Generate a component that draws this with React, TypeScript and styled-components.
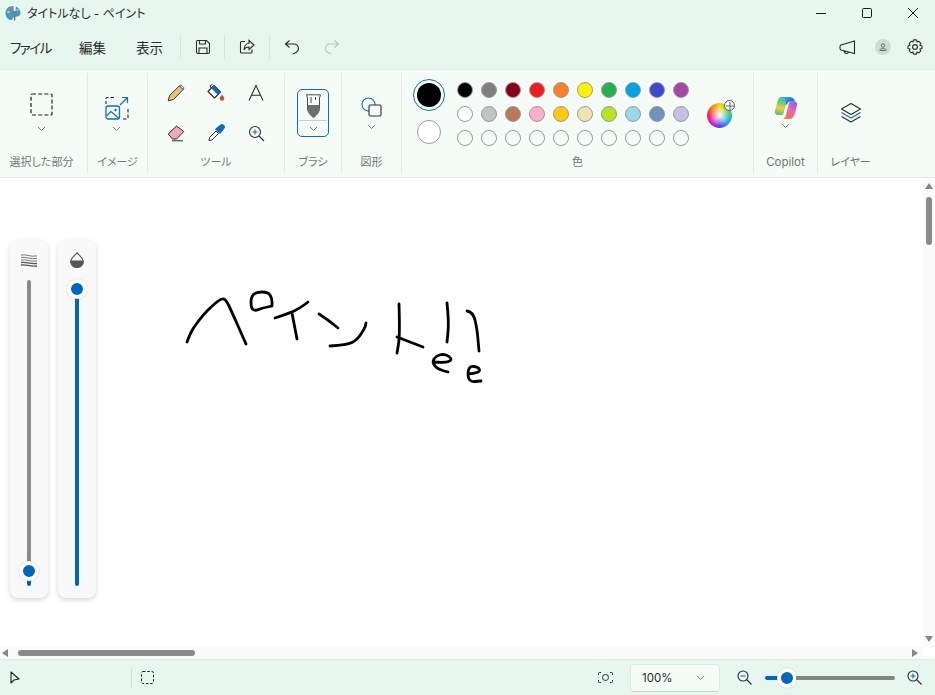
import React from 'react'
import styled, { createGlobalStyle } from 'styled-components'

const ROW_1 = ['#000000', '#7f7f7f', '#880015', '#ed1c24', '#ff7f27', '#fff200', '#22b14c', '#00a2e8', '#3f48cc', '#a349a4']
const ROW_2 = ['#ffffff', '#c3c3c3', '#b97a57', '#ffaec9', '#ffc90e', '#efe4b0', '#b5e61d', '#99d9ea', '#7092be', '#c8bfe7']
const ROW_3 = Array(10).fill('transparent')

const STROKES: number[][][] = [
  [[187, 342], [190, 334], [194, 327], [203, 315], [213, 305], [222, 298], [226, 300], [231, 310], [246, 344]],
  [[272, 306], [262, 308], [255, 311], [251, 308], [251, 297], [256, 292], [268, 292], [272, 298], [272, 306]],
  [[275, 318], [290, 313], [300, 308], [308, 302]],
  [[292, 313], [297, 339]],
  [[319, 314], [328, 320], [338, 328]],
  [[330, 346], [347, 345], [357, 340], [365, 328], [366, 323]],
  [[399, 304], [400, 335], [397, 353]],
  [[397, 337], [410, 342], [423, 347]],
  [[447, 303], [449, 322], [447, 342]],
  [[467, 311], [473, 312], [477, 328], [479, 351]],
  [[434, 362], [445, 363], [452, 360], [449, 356], [443, 354], [436, 356], [432, 362], [437, 369], [448, 372]],
  [[468, 374], [480, 373], [479, 367], [468, 366], [468, 382], [481, 381]],
]

// quadratic curves through the midpoints, so the pen lines stay soft
const smooth = (pts: number[][]) => {
  let d = `M${pts[0][0]} ${pts[0][1]}`
  for (let i = 1; i < pts.length - 1; i++) {
    const mx = (pts[i][0] + pts[i + 1][0]) / 2
    const my = (pts[i][1] + pts[i + 1][1]) / 2
    d += ` Q${pts[i][0]} ${pts[i][1]} ${mx} ${my}`
  }
  const last = pts[pts.length - 1]
  return `${d} L${last[0]} ${last[1]}`
}

const GlobalStyle = createGlobalStyle`
  html, body {
    margin: 0;
    padding: 0;
    overflow: hidden;
  }
  body {
    font-family: "Inter", "Noto Sans CJK JP", sans-serif;
    font-feature-settings: "palt";
  }
`

const Chevron = () => (
  <svg width="9" height="6" viewBox="0 0 9 6" fill="none" stroke="#7a7a7a" strokeWidth="1">
    <path d="M1 1 L4.5 4.5 L8 1" />
  </svg>
)

const App = () => {
  return (
    <Window>
      <GlobalStyle />
      <TitleBar>
        <svg width="16" height="16" viewBox="0 0 16 16">
          <path d="M8 1 C3 1 .5 4.5 .5 8 C.5 12 3 15 6 15 C8 15 7.500 12.500 9 12 C11 11.500 15.500 12 15.500 8 C15.500 4 12 1 8 1 Z" fill="#3f9bd0" />
          <circle cx="3.500" cy="7" r="1.300" fill="#f2c14e" />
          <circle cx="6" cy="3.600" r="1.300" fill="#e8604c" />
          <circle cx="12.500" cy="5" r="1.300" fill="#8ed081" />
          <path d="M8.500 1 H11 L10.500 6 H8.800 Z" fill="#e4f2fa" />
          <path d="M8.800 6 H10.500 L10.300 15.500 H8.800 Z" fill="#a9703a" />
        </svg>
        <TitleText>タイトルなし - ペイント</TitleText>
        <WindowControls>
          <WindowButton>
            <svg width="12" height="12" viewBox="0 0 12 12" stroke="#1a1a1a" strokeWidth="1"><path d="M1 6.500 H11" /></svg>
          </WindowButton>
          <WindowButton>
            <svg width="12" height="12" viewBox="0 0 12 12" fill="none" stroke="#1a1a1a" strokeWidth="1"><rect x="1.500" y="1.500" width="9" height="9" rx="1" /></svg>
          </WindowButton>
          <WindowButton>
            <svg width="12" height="12" viewBox="0 0 12 12" stroke="#1a1a1a" strokeWidth="1"><path d="M1 1 L11 11 M11 1 L1 11" /></svg>
          </WindowButton>
        </WindowControls>
      </TitleBar>

      <MenuBar>
        <MenuItem $width={69} $tight>ファイル</MenuItem>
        <MenuItem $width={57}>編集</MenuItem>
        <MenuItem $width={44}>表示</MenuItem>
        <MenuDivider />
        <MenuIcon $width={43}>
          <svg width="16" height="16" viewBox="0 0 16 16" fill="none" stroke="#2b2b2b" strokeWidth="1.100">
            <path d="M2.500 1.500 H11.500 L14.500 4.500 V13 A1.500 1.500 0 0 1 13 14.500 H3 A1.500 1.500 0 0 1 1.500 13 V2.500 A1 1 0 0 1 2.500 1.500 Z" />
            <path d="M4.500 1.500 V5 H10.500 V1.500 M4 14.500 V9 H12 V14.500" />
          </svg>
        </MenuIcon>
        <MenuDivider />
        <MenuIcon $width={44}>
          <svg width="16" height="16" viewBox="0 0 16 16" fill="none" stroke="#2b2b2b" strokeWidth="1.100">
            <path d="M6 2.500 H2.500 A1 1 0 0 0 1.500 3.500 V13 A1 1 0 0 0 2.500 14 H12 A1 1 0 0 0 13 13 V10.500" />
            <path d="M10 1.500 L15 6 L10 10.500 V8 C7 8 5.500 9.500 5 11 C5 7.500 7 4.500 10 4.200 Z" />
          </svg>
        </MenuIcon>
        <MenuDivider />
        <MenuIcon $width={44}>
          <svg width="16" height="16" viewBox="0 0 16 16" fill="none" stroke="#2b2b2b" strokeWidth="1.100">
            <path d="M5.500 1.500 L1.500 5 L5.500 8.500 M1.500 5 H10 A4.500 4.500 0 0 1 12 13.500 L9 15" />
          </svg>
        </MenuIcon>
        <MenuIcon $width={36}>
          <svg width="16" height="16" viewBox="0 0 16 16" fill="none" stroke="#b9c2bd" strokeWidth="1.100">
            <path d="M10.500 1.500 L14.500 5 L10.500 8.500 M14.500 5 H6 A4.500 4.500 0 0 0 4 13.500 L7 15" />
          </svg>
        </MenuIcon>
        <MenuSpacer />
        <MenuIcon $width={32}>
          <svg width="17" height="15" viewBox="0 0 17 15" fill="none" stroke="#2b2b2b" strokeWidth="1.100">
            <path d="M15.500 1 V13.500 L2 10 A2 2 0 0 1 1 8 V7 A2 2 0 0 1 2 5 Z M5 11 A2.500 2.500 0 0 0 9.500 12.500" />
          </svg>
        </MenuIcon>
        <MenuIcon $width={40}>
          <Avatar>
            <svg width="8" height="8" viewBox="0 0 8 8" fill="none" stroke="#5d6660" strokeWidth=".9">
              <circle cx="4" cy="2.500" r="1.700" />
              <path d="M1 7.500 H7 V6.500 C7 5.500 1 5.500 1 6.500 Z" />
            </svg>
          </Avatar>
        </MenuIcon>
        <MenuIcon $width={24}>
          <svg width="16" height="16" viewBox="0 0 16 16" fill="none" stroke="#2b2b2b" strokeWidth="1.100">
            <circle cx="8" cy="8" r="2.400" />
            <path d="M6.500 .9 H9.500 L10 3 L11.800 2.300 L13.800 4.400 L12.900 6.200 L15 7 V9.500 L12.900 10 L13.800 11.900 L11.800 13.800 L10 13 L9.500 15.100 H6.500 L6 13 L4.200 13.800 L2.200 11.900 L3.100 10 L1 9.500 V7 L3.100 6.200 L2.200 4.400 L4.200 2.300 L6 3 Z" strokeLinejoin="round" />
          </svg>
        </MenuIcon>
      </MenuBar>

      <Ribbon>
        <Group $width={88}>
          <GroupBody $top={21} $gap={10} $shift={-2}>
            <svg width="23" height="23" viewBox="0 0 23 23" fill="none" stroke="#1f1f1f" strokeWidth="1.200" strokeDasharray="4 2.200">
              <rect x="1" y="1" width="21" height="21" rx="1" />
            </svg>
            <Chevron />
          </GroupBody>
          <GroupLabel $shift={-2}>選択した部分</GroupLabel>
        </Group>

        <Group $width={60}>
          <GroupBody $top={24} $gap={6} $shift={-1}>
            <svg width="24" height="24" viewBox="0 0 24 24" fill="none">
              <path d="M9 1.500 H2 A1 1 0 0 0 1 2.500 V8 M18 23 H22 A1 1 0 0 0 23 22 V12" stroke="#1f1f1f" strokeWidth="1.100" strokeDasharray="3.500 2" />
              <rect x="1" y="10" width="13.500" height="13" rx="2" stroke="#0f6cbd" strokeWidth="1.300" />
              <path d="M1.500 20 L6 15.500 L13.500 22" stroke="#0f6cbd" strokeWidth="1.200" />
              <circle cx="10.500" cy="14" r="1.200" fill="#0f6cbd" />
              <path d="M15 9 L22.500 1.500 M17 1.500 H22.500 V7" stroke="#0f6cbd" strokeWidth="1.200" />
            </svg>
            <Chevron />
          </GroupBody>
          <GroupLabel>イメージ</GroupLabel>
        </Group>

        <Group $width={137}>
          <ToolGrid>
            <ToolCell>
              <svg width="18" height="18" viewBox="0 0 18 18">
                <path d="M1.200 16.800 L2.500 11.500 L12.500 1.800 L16.200 5.500 L6.500 15.500 Z" fill="#e8c17a" stroke="#3a3a3a" strokeWidth="1" strokeLinejoin="round" />
                <path d="M12.500 1.800 L14 .9 L17 3.900 L16.200 5.500 Z" fill="#ffffff" stroke="#3a3a3a" strokeWidth=".8" />
              </svg>
            </ToolCell>
            <ToolCell>
              <svg width="18" height="18" viewBox="0 0 18 18">
                <path d="M1 7.500 L7 1.500 L13.500 8 L7.500 14 Z" fill="#ffffff" stroke="#2b2b2b" strokeWidth="1.100" strokeLinejoin="round" />
                <path d="M7 2 L13 8 L10.500 10.500 L4.500 4.500 Z" fill="#0f6cbd" />
                <path d="M4 4 L3 1.500 L5.500 .5" fill="none" stroke="#2b2b2b" strokeWidth="1" />
                <path d="M15 10.500 C15.800 12 17.300 13 17.300 14.500 A2.300 2.300 0 0 1 12.700 14.500 C12.700 13 14.200 12 15 10.500 Z" fill="#c8502a" />
              </svg>
            </ToolCell>
            <ToolCell>
              <svg width="18" height="18" viewBox="0 0 18 18" fill="none" stroke="#2b2b2b" strokeWidth="1.100">
                <path d="M2 16.500 L9 1.500 L16 16.500 M4.500 11.200 H13.500" />
              </svg>
            </ToolCell>
            <ToolCell>
              <svg width="18" height="18" viewBox="0 0 18 18">
                <path d="M1.200 10 L9.500 2 L16.800 7.500 L9.500 15 L5.500 15 Z" fill="#f4a9ae" stroke="#2b2b2b" strokeWidth="1" strokeLinejoin="round" />
                <path d="M5 16.800 H16" stroke="#2b2b2b" strokeWidth="1" />
              </svg>
            </ToolCell>
            <ToolCell>
              <svg width="18" height="18" viewBox="0 0 18 18">
                <path d="M2 16.500 L2.500 13.500 L9 7 L11.500 9.500 L5 16 Z" fill="#ffffff" stroke="#2b2b2b" strokeWidth="1" strokeLinejoin="round" />
                <path d="M8 5 L11 2.500 L13 1 A2.500 2.500 0 0 1 17 5 L15.500 7 L13 10 Z" fill="#0f6cbd" />
              </svg>
            </ToolCell>
            <ToolCell>
              <svg width="17" height="17" viewBox="0 0 17 17" fill="none" stroke="#2b2b2b" strokeWidth="1.100">
                <circle cx="7" cy="7" r="5.500" />
                <path d="M11 11 L16 16" />
                <path d="M4.500 7 H9.500 M7 4.500 V9.500" stroke="#0f6cbd" />
              </svg>
            </ToolCell>
          </ToolGrid>
          <GroupLabel>ツール</GroupLabel>
        </Group>

        <Group $width={57}>
          <GroupBody $top={17} $gap={0}>
            <BrushButton>
              <BrushPreview>
                <svg width="15" height="24" viewBox="0 0 15 24">
                  <path d="M.5 .8 H14.500 L13.500 4 V14 C13.500 18 10.500 21.500 7.500 23.500 C4.500 21.500 1.500 18 1.500 14 V4 Z" fill="#f7fbf9" stroke="#4a4a4a" strokeWidth="1" />
                  <path d="M1.500 11 H13.500 V14 C13.500 18 10.500 21.500 7.500 23.500 C4.500 21.500 1.500 18 1.500 14 Z" fill="#6e6e6e" />
                  <path d="M5 3 V9 M9.500 3 V6" stroke="#4a4a4a" strokeWidth="1" />
                </svg>
              </BrushPreview>
              <BrushChevron><Chevron /></BrushChevron>
            </BrushButton>
          </GroupBody>
          <GroupLabel>ブラシ</GroupLabel>
        </Group>

        <Group $width={60}>
          <GroupBody $top={25} $gap={7}>
            <svg width="21" height="20" viewBox="0 0 21 20" fill="none">
              <circle cx="7.500" cy="7.500" r="6.500" stroke="#0f6cbd" strokeWidth="1.100" />
              <rect x="8" y="8" width="12" height="11" rx="1.500" fill="#f5fcf8" stroke="#2b2b2b" strokeWidth="1.100" />
            </svg>
            <Chevron />
          </GroupBody>
          <GroupLabel>図形</GroupLabel>
        </Group>

        <Group $width={352}>
          <ColorBody>
            <CurrentColors>
              <ActiveRing><ColorDot $size={24} $color="#000000" /></ActiveRing>
              <SecondColor />
            </CurrentColors>
            <Palette>
              {[ROW_1, ROW_2, ROW_3].map((row, r) =>
                row.map((color, c) => <Swatch key={`${r}-${c}`} $color={color} />)
              )}
            </Palette>
            <WheelSlot>
              <ColorWheel>
                <PlusBadge>
                  <svg width="8" height="8" viewBox="0 0 8 8" stroke="#6a6a6a" strokeWidth="1"><path d="M4 0 V8 M0 4 H8" /></svg>
                </PlusBadge>
              </ColorWheel>
            </WheelSlot>
          </ColorBody>
          <GroupLabel>色</GroupLabel>
        </Group>

        <Group $width={64}>
          <GroupBody $top={24} $gap={3}>
            <svg width="24" height="24" viewBox="0 0 24 24">
              <defs>
                <linearGradient id="copTop" x1="0" y1="0" x2="1" y2="1">
                  <stop offset="0" stopColor="#2fb7ef" />
                  <stop offset=".6" stopColor="#1e6fe0" />
                  <stop offset="1" stopColor="#2346c0" />
                </linearGradient>
                <linearGradient id="copLeft" x1=".5" y1="0" x2=".3" y2="1">
                  <stop offset="0" stopColor="#34b8d8" />
                  <stop offset=".35" stopColor="#79cf5e" />
                  <stop offset=".6" stopColor="#f7c948" />
                  <stop offset="1" stopColor="#4fc27e" />
                </linearGradient>
                <linearGradient id="copRight" x1="1" y1="0" x2="0" y2="1">
                  <stop offset="0" stopColor="#8a5fe8" />
                  <stop offset=".45" stopColor="#e464c2" />
                  <stop offset=".75" stopColor="#f4714e" />
                  <stop offset="1" stopColor="#ffa53d" />
                </linearGradient>
              </defs>
              <path d="M8 1 C5 1 4 3 3 7 L1 15 C.5 17.500 2 19 4 19 H8 C9 19 9.500 18 10 16 L12 8 C12.500 6 13 3 15 1 Z" fill="url(#copLeft)" />
              <path d="M16 5.500 H20 C22.500 5.500 23.500 7 23 9 L21 17 C20.500 19 19 23 16 23 H8 C10 23 11.500 21 12 19 L14 11 C14.500 9 15 6.500 16 5.500 Z" fill="url(#copRight)" />
              <path d="M9 1 H16 C18.500 1 20 2.500 21 5.500 H16 C14.500 5.500 13.500 7 13 9 L12 8 C12.500 6 11 3 9 1 Z" fill="url(#copTop)" />
            </svg>
            <Chevron />
          </GroupBody>
          <CopilotLabel>Copilot</CopilotLabel>
        </Group>

        <Group $width={66} $last>
          <GroupBody $top={30} $gap={0}>
            <svg width="22" height="22" viewBox="0 0 22 22" fill="none" strokeWidth="1.100" strokeLinejoin="round">
              <path d="M11 1.500 L20.500 7 L11 12.500 L1.500 7 Z" stroke="#2b2b2b" />
              <path d="M1.500 10.500 L11 16 L20.500 10.500" stroke="#0f6cbd" />
              <path d="M1.500 14.500 L11 20 L20.500 14.500" stroke="#2b2b2b" />
            </svg>
          </GroupBody>
          <GroupLabel>レイヤー</GroupLabel>
        </Group>
      </Ribbon>

      <Workspace>
        <Canvas>
          <Drawing width="923" height="469" viewBox="0 178 923 469" fill="none" stroke="#000" strokeWidth="2.800" strokeLinecap="round" strokeLinejoin="round">
            {STROKES.map((pts, i) => <path key={i} d={smooth(pts)} />)}
          </Drawing>
          <SliderPanels>
            <SliderPanel>
              <SliderIcon>
                <svg width="16" height="13" viewBox="0 0 16 13" fill="none" stroke="#555" strokeWidth="1">
                  <path d="M0 1 C5 0 9 3 16 2 M0 3.500 C5 2.500 9 5.500 16 4.500 M0 6 C5 5 9 8 16 7" strokeWidth=".8" />
                  <path d="M0 8.500 C5 7.500 9 10.500 16 9.500 M0 11 C5 10 9 13 16 12" strokeWidth="1.300" />
                </svg>
              </SliderIcon>
              <SliderTrack $color="#8a8a8a" $low="#0067c0" $split={94}>
                <SliderThumb $top={291} />
              </SliderTrack>
            </SliderPanel>
            <SliderPanel>
              <SliderIcon>
                <svg width="14" height="16" viewBox="0 0 14 16">
                  <path d="M7 .8 C9 3.500 13.300 6 13.300 10 A6.300 5.500 0 0 1 .7 10 C.7 6 5 3.500 7 .8 Z" fill="none" stroke="#555" strokeWidth="1.100" />
                  <path d="M.7 8.500 H13.300 C13.800 13 10 15.500 7 15.500 C4 15.500 .2 13 .7 8.500 Z" fill="#555" />
                </svg>
              </SliderIcon>
              <SliderTrack $color="#0067c0" $low="#0067c0" $split={100}>
                <SliderThumb $top={9} />
              </SliderTrack>
            </SliderPanel>
          </SliderPanels>
        </Canvas>
        <VScroll>
          <Arrow $dir="up" />
          <VThumbRail><VThumb /></VThumbRail>
          <Arrow $dir="down" />
        </VScroll>
      </Workspace>

      <HScrollRow>
        <HScroll>
          <Arrow $dir="left" />
          <HThumbRail><HThumb /></HThumbRail>
          <Arrow $dir="right" />
        </HScroll>
        <ScrollCorner />
      </HScrollRow>

      <StatusBar>
        <StatusLeft>
          <svg width="10" height="13" viewBox="0 0 10 13" fill="none" stroke="#1f1f1f" strokeWidth="1.100">
            <path d="M1 1 V12 L4 9 L9 8 Z" strokeLinejoin="round" />
          </svg>
        </StatusLeft>
        <StatusDivider />
        <svg width="13" height="13" viewBox="0 0 13 13" fill="none" stroke="#1f1f1f" strokeWidth="1" strokeDasharray="2.500 1.800">
          <rect x=".5" y=".5" width="12" height="12" rx="1.500" />
        </svg>
        <StatusSpacer />
        <svg width="15" height="11" viewBox="0 0 15 11" fill="none" stroke="#2b2b2b" strokeWidth="1">
          <circle cx="7.500" cy="5.500" r="3" />
          <path d="M3 .5 H1.500 A1 1 0 0 0 .5 1.500 V3 M12 .5 H13.500 A1 1 0 0 1 14.500 1.500 V3 M3 10.500 H1.500 A1 1 0 0 1 .5 9.500 V8 M12 10.500 H13.500 A1 1 0 0 0 14.500 9.500 V8" />
        </svg>
        <ZoomSelect>
          <span>100%</span>
          <Chevron />
        </ZoomSelect>
        <svg width="15" height="15" viewBox="0 0 15 15" fill="none" stroke="#2b2b2b" strokeWidth="1.100">
          <circle cx="6" cy="6" r="5" />
          <path d="M9.500 9.500 L14.500 14.500" />
          <path d="M3.500 6 H8.500" stroke="#0f6cbd" />
        </svg>
        <ZoomSlider>
          <ZoomFill />
          <ZoomKnob />
          <ZoomRest />
        </ZoomSlider>
        <svg width="15" height="15" viewBox="0 0 15 15" fill="none" stroke="#2b2b2b" strokeWidth="1.100">
          <circle cx="6" cy="6" r="5" />
          <path d="M9.500 9.500 L14.500 14.500" />
          <path d="M3.500 6 H8.500 M6 3.500 V8.500" stroke="#0f6cbd" />
        </svg>
      </StatusBar>
    </Window>
  )
}

const Window = styled.div`
  width: 935px;
  height: 695px;
  display: flex;
  flex-direction: column;
  background: #e6f7ef;
  color: #1f1f1f;
  overflow: hidden;
`

const TitleBar = styled.div`
  height: 29px;
  flex: none;
  box-sizing: border-box;
  display: flex;
  align-items: center;
  padding: 0 0 4px 5px;
`

const TitleText = styled.span`
  margin-left: 6px;
  font-size: 12px;
  color: #2b2b2b;
  white-space: nowrap;
`

const WindowControls = styled.div`
  margin-left: auto;
  display: flex;
  margin-right: -1px;
`

const WindowButton = styled.div`
  width: 46px;
  height: 25px;
  display: flex;
  align-items: center;
  justify-content: center;
`

const MenuBar = styled.div`
  height: 40px;
  flex: none;
  display: flex;
  align-items: center;
  padding: 0 8px 4px 10px;
  box-sizing: border-box;
`

const MenuItem = styled.div<{ $width: number; $tight?: boolean }>`
  width: ${(p) => p.$width}px;
  font-size: 13.500px;
  letter-spacing: ${(p) => (p.$tight ? '-1.500px' : '0')};
  color: #2b2b2b;
  white-space: nowrap;
`

const MenuDivider = styled.div`
  width: 1px;
  height: 24px;
  background: #d7e3dd;
`

const MenuIcon = styled.div<{ $width: number }>`
  width: ${(p) => p.$width}px;
  display: flex;
  justify-content: center;
`

const MenuSpacer = styled.div`
  flex: 1;
`

const Avatar = styled.div`
  width: 16px;
  height: 16px;
  border-radius: 50%;
  background: #d2dad6;
  display: flex;
  align-items: center;
  justify-content: center;
`

const Ribbon = styled.div`
  height: 109px;
  flex: none;
  box-sizing: border-box;
  padding: 3px 0 4px;
  display: flex;
  background: #f5fcf8;
  border-top: 1px solid #e4ece8;
  border-bottom: 1px solid #e3e7e5;
`

const Group = styled.div<{ $width: number; $last?: boolean }>`
  width: ${(p) => p.$width}px;
  flex: none;
  box-sizing: border-box;
  display: flex;
  flex-direction: column;
  border-right: 1px solid ${(p) => (p.$last ? 'transparent' : '#e2ebe6')};
`

const GroupBody = styled.div<{ $top: number; $gap: number; $shift?: number }>`
  height: 78px;
  box-sizing: border-box;
  padding-top: ${(p) => p.$top - 1}px;
  padding-right: ${(p) => -(p.$shift ?? 0) * 2}px;
  display: flex;
  flex-direction: column;
  align-items: center;
  gap: ${(p) => p.$gap}px;
`

const GroupLabel = styled.div<{ $shift?: number }>`
  height: 22px;
  line-height: 22px;
  font-size: 11px;
  color: #6f7672;
  text-align: center;
  white-space: nowrap;
  padding-right: ${(p) => -(p.$shift ?? 0) * 2}px;
`

const CopilotLabel = styled(GroupLabel)`
  font-size: 11.500px;
`

const ToolGrid = styled.div`
  height: 78px;
  display: grid;
  grid-template-columns: repeat(3, 40px);
  grid-template-rows: repeat(2, 40px);
  justify-content: center;
`

const ToolCell = styled.div`
  display: flex;
  align-items: center;
  justify-content: center;
`

const BrushButton = styled.div`
  width: 32px;
  height: 48px;
  box-sizing: border-box;
  border: 1.300px solid #0f6cbd;
  border-radius: 5px;
  display: flex;
  flex-direction: column;
  align-items: center;
  background: #f3faf7;
`

const BrushPreview = styled.div`
  height: 31px;
  width: 28px;
  display: flex;
  align-items: flex-end;
  justify-content: center;
  padding-bottom: 2px;
  box-sizing: border-box;
  border-bottom: 1px solid #c9cfcc;
`

const BrushChevron = styled.div`
  flex: 1;
  display: flex;
  align-items: center;
`

const ColorBody = styled.div`
  height: 78px;
  display: flex;
  align-items: flex-start;
  padding-left: 11px;
`

const CurrentColors = styled.div`
  width: 32px;
  padding-top: 6px;
  display: flex;
  flex-direction: column;
  align-items: center;
  gap: 9px;
`

const ActiveRing = styled.div`
  width: 32px;
  height: 32px;
  box-sizing: border-box;
  border: 1.200px solid #0f6cbd;
  border-radius: 50%;
  display: flex;
  align-items: center;
  justify-content: center;
`

const ColorDot = styled.div<{ $size: number; $color: string }>`
  width: ${(p) => p.$size}px;
  height: ${(p) => p.$size}px;
  border-radius: 50%;
  background: ${(p) => p.$color};
`

const SecondColor = styled.div`
  width: 24px;
  height: 24px;
  box-sizing: border-box;
  border: 1px solid #9a9a9a;
  border-radius: 50%;
  background: #ffffff;
`

const Palette = styled.div`
  margin-left: 12px;
  padding-top: 9px;
  display: grid;
  grid-template-columns: repeat(10, 16px);
  grid-auto-rows: 16px;
  gap: 8px;
`

const Swatch = styled.div<{ $color: string }>`
  box-sizing: border-box;
  border-radius: 50%;
  border: 1px solid #9a9a9a;
  background: ${(p) => p.$color};
`

const WheelSlot = styled.div`
  margin-left: 18px;
  padding-top: 30px;
`

const ColorWheel = styled.div`
  position: relative;
  width: 25px;
  height: 25px;
  border-radius: 50%;
  background:
    radial-gradient(circle, #ffffff 0%, rgba(255, 255, 255, 0) 60%),
    conic-gradient(#ffd400, #7ed321, #26c6a6, #2a9df4, #5a3fe0, #d51fd0, #f01f5a, #f57a1f, #ffd400);
`

const PlusBadge = styled.div`
  position: absolute;
  top: -3px;
  right: -3px;
  width: 11px;
  height: 11px;
  box-sizing: border-box;
  border: 1px solid #5a5a5a;
  border-radius: 50%;
  background: #f5fcf8;
  display: flex;
  align-items: center;
  justify-content: center;
`

const Workspace = styled.div`
  height: 469px;
  flex: none;
  display: flex;
`

const Canvas = styled.div`
  position: relative;
  flex: 1;
  background: #ffffff;
`

const Drawing = styled.svg`
  position: absolute;
  inset: 0;
`

const SliderPanels = styled.div`
  position: absolute;
  left: 10px;
  top: 62px;
  display: flex;
  gap: 10px;
`

const SliderPanel = styled.div`
  width: 38px;
  height: 358px;
  box-sizing: border-box;
  padding-top: 11px;
  border-radius: 8px;
  background: #f9f9f9;
  box-shadow: 0 2px 5px rgba(0, 0, 0, 0.16);
  display: flex;
  flex-direction: column;
  align-items: center;
  gap: 11px;
`

const SliderIcon = styled.div`
  height: 18px;
  display: flex;
  align-items: center;
`

const SliderTrack = styled.div<{ $color: string; $low: string; $split: number }>`
  position: relative;
  width: 4px;
  height: 306px;
  border-radius: 2px;
  background: linear-gradient(
    to bottom,
    ${(p) => p.$color} ${(p) => p.$split}%,
    ${(p) => p.$low} ${(p) => p.$split}%
  );
`

const SliderThumb = styled.div<{ $top: number }>`
  position: absolute;
  left: -8px;
  top: ${(p) => p.$top - 10}px;
  width: 20px;
  height: 20px;
  box-sizing: border-box;
  border: 4px solid #ffffff;
  border-radius: 50%;
  background: #0067c0;
  box-shadow: 0 0 2px rgba(0, 0, 0, 0.2);
`

const VScroll = styled.div`
  width: 12px;
  flex: none;
  background: #fafafa;
  display: flex;
  flex-direction: column;
  align-items: center;
  padding: 5px 0 5px;
  box-sizing: border-box;
`

const VThumbRail = styled.div`
  flex: 1;
  padding-top: 8px;
`

const VThumb = styled.div`
  width: 6px;
  height: 48px;
  border-radius: 3px;
  background: #8a8a8a;
`

const Arrow = styled.div<{ $dir: 'up' | 'down' | 'left' | 'right' }>`
  width: 0;
  height: 0;
  flex: none;
  ${(p) => (p.$dir === 'up' ? 'border-bottom: 6px solid #858585; border-left: 4.5px solid transparent; border-right: 4.5px solid transparent;' : '')}
  ${(p) => (p.$dir === 'down' ? 'border-top: 6px solid #858585; border-left: 4.5px solid transparent; border-right: 4.5px solid transparent;' : '')}
  ${(p) => (p.$dir === 'left' ? 'border-right: 6px solid #858585; border-top: 4.5px solid transparent; border-bottom: 4.5px solid transparent;' : '')}
  ${(p) => (p.$dir === 'right' ? 'border-left: 6px solid #858585; border-top: 4.5px solid transparent; border-bottom: 4.5px solid transparent;' : '')}
`

const HScrollRow = styled.div`
  height: 12px;
  flex: none;
  display: flex;
`

const HScroll = styled.div`
  flex: 1;
  background: #fafafa;
  display: flex;
  align-items: center;
  padding: 0 5px 0 2px;
`

const HThumbRail = styled.div`
  flex: 1;
  padding-left: 10px;
`

const HThumb = styled.div`
  width: 177px;
  height: 6px;
  border-radius: 3px;
  background: #8a8a8a;
`

const ScrollCorner = styled.div`
  width: 12px;
  background: #ffffff;
`

const StatusBar = styled.div`
  flex: 1;
  display: flex;
  align-items: center;
  padding: 0 13px 0 10px;
  background: #e6f7f0;
  border-top: 1px solid #e1e9e5;
`

const StatusLeft = styled.div`
  width: 121px;
  display: flex;
`

const StatusDivider = styled.div`
  width: 1px;
  height: 20px;
  background: #d5dfda;
  margin-right: 9px;
`

const StatusSpacer = styled.div`
  flex: 1;
`

const ZoomSelect = styled.div`
  margin: 0 17px;
  width: 90px;
  height: 28px;
  box-sizing: border-box;
  padding: 0 14px 0 11px;
  display: flex;
  align-items: center;
  justify-content: space-between;
  font-size: 11.500px;
  color: #2b2b2b;
  background: #f5fcf8;
  border: 1px solid #e0e8e4;
  border-bottom-color: #c9d2cd;
  border-radius: 4px;
`

const ZoomSlider = styled.div`
  margin: 0 12px 0 13px;
  width: 130px;
  display: flex;
  align-items: center;
`

const ZoomFill = styled.div`
  width: 13px;
  height: 4px;
  border-radius: 2px 0 0 2px;
  background: #0067c0;
`

const ZoomKnob = styled.div`
  width: 20px;
  height: 20px;
  flex: none;
  margin: 0 -1px 0 -1px;
  box-sizing: border-box;
  border: 4px solid #ffffff;
  border-radius: 50%;
  background: #0067c0;
  box-shadow: 0 0 2px rgba(0, 0, 0, 0.2);
`

const ZoomRest = styled.div`
  flex: 1;
  height: 4px;
  border-radius: 0 2px 2px 0;
  background: #7f8a85;
`

export default App
